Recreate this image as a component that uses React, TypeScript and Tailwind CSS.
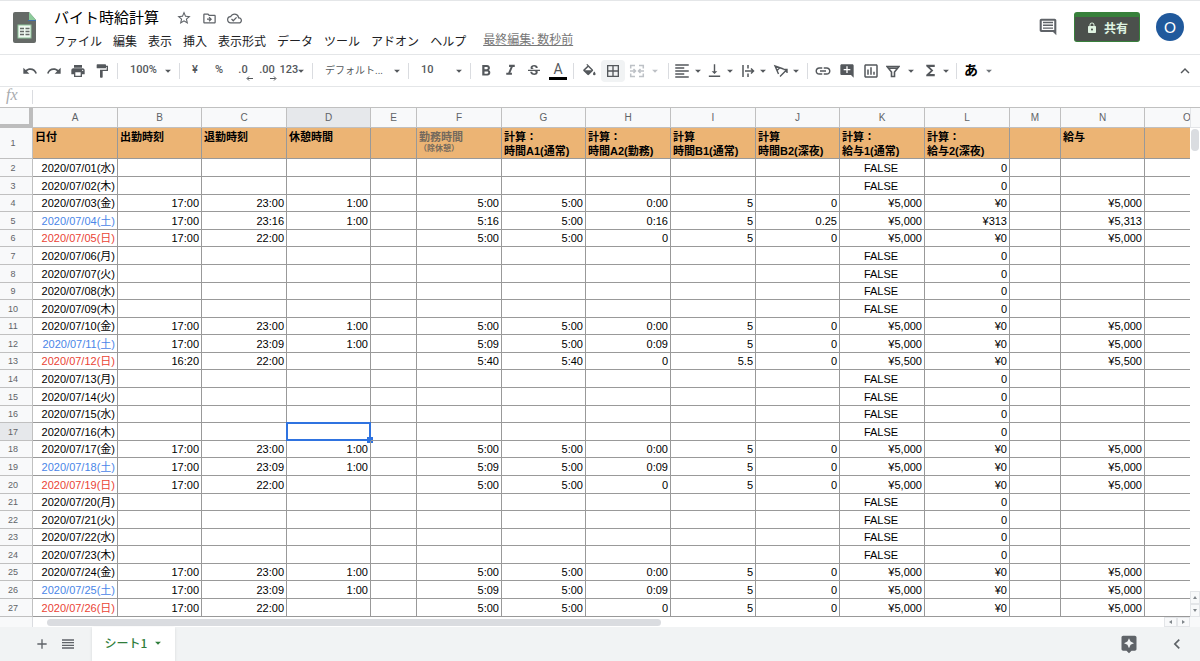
import React, { useState } from 'react';
import {
  MdAddComment,
  MdArrowDropDown,
  MdAssistant,
  MdBorderAll,
  MdChevronLeft,
  MdAdd,
  MdFormatAlignLeft,
  MdFormatBold,
  MdFormatColorFill,
  MdFormatItalic,
  MdFormatPaint,
  MdFunctions,
  MdKeyboardArrowUp,
  MdLink,
  MdLock,
  MdOutlineCloudDone,
  MdOutlineDriveFileMove,
  MdOutlineInsertChart,
  MdPrint,
  MdRedo,
  MdReorder,
  MdStarBorder,
  MdStrikethroughS,
  MdUndo,
  MdVerticalAlignBottom,
} from 'react-icons/md';

const MENUS = ['ファイル', '編集', '表示', '挿入', '表示形式', 'データ', 'ツール', 'アドオン', 'ヘルプ'];

const COLUMNS = [
  { id: 'A', width: 'w-[85px]', title: '日付' },
  { id: 'B', width: 'w-[84px]', title: '出勤時刻' },
  { id: 'C', width: 'w-[85px]', title: '退勤時刻' },
  { id: 'D', width: 'w-[84px]', title: '休憩時間' },
  { id: 'E', width: 'w-[46px]', title: '' },
  { id: 'F', width: 'w-[85px]', title: '勤務時間', note: '（除休憩）' },
  { id: 'G', width: 'w-[84px]', title: '計算：', sub: '時間A1(通常)' },
  { id: 'H', width: 'w-[85px]', title: '計算：', sub: '時間A2(勤務)' },
  { id: 'I', width: 'w-[85px]', title: '計算', sub: '時間B1(通常)' },
  { id: 'J', width: 'w-[84px]', title: '計算', sub: '時間B2(深夜)' },
  { id: 'K', width: 'w-[85px]', title: '計算：', sub: '給与1(通常)' },
  { id: 'L', width: 'w-[85px]', title: '計算：', sub: '給与2(深夜)' },
  { id: 'M', width: 'w-[51px]', title: '' },
  { id: 'N', width: 'w-[84px]', title: '給与' },
  { id: 'O', width: 'w-[85px]', title: '' },
];

const WEEKDAYS = ['日', '月', '火', '水', '木', '金', '土'];

// Worked days only: start, end, break, total, A1, A2, B1, B2, pay 1, pay 2, total pay
const SHIFTS: Record<number, string[]> = {
  3: ['17:00', '23:00', '1:00', '5:00', '5:00', '0:00', '5', '0', '¥5,000', '¥0', '¥5,000'],
  4: ['17:00', '23:16', '1:00', '5:16', '5:00', '0:16', '5', '0.25', '¥5,000', '¥313', '¥5,313'],
  5: ['17:00', '22:00', '', '5:00', '5:00', '0', '5', '0', '¥5,000', '¥0', '¥5,000'],
  10: ['17:00', '23:00', '1:00', '5:00', '5:00', '0:00', '5', '0', '¥5,000', '¥0', '¥5,000'],
  11: ['17:00', '23:09', '1:00', '5:09', '5:00', '0:09', '5', '0', '¥5,000', '¥0', '¥5,000'],
  12: ['16:20', '22:00', '', '5:40', '5:40', '0', '5.5', '0', '¥5,500', '¥0', '¥5,500'],
  17: ['17:00', '23:00', '1:00', '5:00', '5:00', '0:00', '5', '0', '¥5,000', '¥0', '¥5,000'],
  18: ['17:00', '23:09', '1:00', '5:09', '5:00', '0:09', '5', '0', '¥5,000', '¥0', '¥5,000'],
  19: ['17:00', '22:00', '', '5:00', '5:00', '0', '5', '0', '¥5,000', '¥0', '¥5,000'],
  24: ['17:00', '23:00', '1:00', '5:00', '5:00', '0:00', '5', '0', '¥5,000', '¥0', '¥5,000'],
  25: ['17:00', '23:09', '1:00', '5:09', '5:00', '0:09', '5', '0', '¥5,000', '¥0', '¥5,000'],
  26: ['17:00', '22:00', '', '5:00', '5:00', '0', '5', '0', '¥5,000', '¥0', '¥5,000'],
};

const buildRow = (day: number) => {
  const weekday = (day + 2) % 7;
  const date = `2020/07/${String(day).padStart(2, '0')}(${WEEKDAYS[weekday]})`;
  const s = SHIFTS[day];
  const values: Record<string, string> = s
    ? { A: date, B: s[0], C: s[1], D: s[2], F: s[3], G: s[4], H: s[5], I: s[6], J: s[7], K: s[8], L: s[9], N: s[10] }
    : { A: date, K: 'FALSE', L: '0' };
  // seven tall rows in every twelve
  const tall = Math.ceil((day * 7) / 12) > Math.ceil(((day - 1) * 7) / 12);
  return { day, weekday, values, tall };
};

const ROWS = Array.from({ length: 26 }, (_, i) => buildRow(i + 1));

const Separator = () => <span className="mx-[3px] h-4 w-px shrink-0 bg-[#dadce0]" />;

const Caret = () => <MdArrowDropDown size={14} className="shrink-0" />;

interface ToolProps {
  label: string;
  className?: string;
  children: React.ReactNode;
}

const Tool: React.FC<ToolProps> = ({ label, className = 'w-6', children }) => (
  <button
    aria-label={label}
    className={`flex h-[22px] shrink-0 items-center justify-center rounded-sm hover:bg-[#f1f3f4] ${className}`}
  >
    {children}
  </button>
);

interface PickerProps {
  label: string;
  className: string;
  options: string[];
}

const Picker: React.FC<PickerProps> = ({ label, className, options }) => (
  <div className={`relative flex h-[22px] shrink-0 items-center ${className}`}>
    <select aria-label={label} className="w-full appearance-none bg-transparent pl-[9px] outline-none">
      {options.map((option) => (
        <option key={option}>{option}</option>
      ))}
    </select>
    <span className="pointer-events-none absolute right-px">
      <Caret />
    </span>
  </div>
);

const SheetsLogo = () => (
  <svg width="24" height="32" viewBox="0 0 24 32" className="shrink-0">
    <path d="M2 0h14l7 8v21a2 2 0 0 1-2 2H2a2 2 0 0 1-2-2V2a2 2 0 0 1 2-2z" fill="#656a67" />
    <path d="M16 0l7 8h-7z" fill="#8ccb9b" />
    <path d="M15 8.500h8" stroke="#3e6ea8" />
    <rect x="5" y="13" width="13" height="13" fill="#eef8f0" stroke="#8fc49b" />
    <path d="M7 16.500h4M12.500 16.500h4M7 19.500h4M12.500 19.500h4M7 22.500h4M12.500 22.500h4" stroke="#656a67" strokeWidth="1.500" />
  </svg>
);

const Header = () => (
  <header className="flex items-start justify-between border-y border-[#e4e6e8] pr-4 pl-[13px]">
    <div className="flex">
      <div className="pt-[11px]">
        <SheetsLogo />
      </div>
      <div className="ml-[17px] pt-1">
        <div className="flex h-[23px] items-center">
          <h1 className="text-[15px] leading-5 text-black">バイト時給計算</h1>
          <div className="ml-[17px] flex items-center gap-[10px] pt-[3px] text-[#5f6368]">
            <button aria-label="スター"><MdStarBorder size={16} /></button>
            <button aria-label="移動"><MdOutlineDriveFileMove size={15} /></button>
            <button aria-label="保存状況"><MdOutlineCloudDone size={15} /></button>
          </div>
        </div>
        <nav className="flex h-[26px] items-center gap-[11px] whitespace-nowrap text-[12px] text-[#202124]">
          {MENUS.map((menu) => (
            <button key={menu}>{menu}</button>
          ))}
          <a href="#history" className="ml-[6px] pb-1 text-[#777] underline">最終編集: 数秒前</a>
        </nav>
      </div>
    </div>
    <div className="flex h-[52px] items-center">
      <button aria-label="コメント履歴" className="mr-4 text-[#5f6368]">
        <svg width="20" height="20" viewBox="0 0 24 24" fill="currentColor">
          <path d="M22 4c0-1.100-.9-2-2-2H4c-1.100 0-2 .9-2 2v12c0 1.100.9 2 2 2h14l4 4V4zM4.500 4.500h15v11h-15z" fillRule="evenodd" />
          <path d="M6 5.700h12v1.700H6zM6 9h12v1.800H6zM6 12.500h12v1.700H6z" />
        </svg>
      </button>
      <button className="flex h-[30px] w-[66px] items-center justify-center gap-[6px] rounded-[3px] border border-t-[5px] border-[#37803b] bg-[#4b504c] pb-[3px] text-[12px] font-bold text-[#dff3e1]">
        <MdLock size={12} />
        共有
      </button>
      <button aria-label="アカウント" className="ml-4 flex h-[28px] w-[28px] items-center justify-center rounded-full bg-[#20599c] font-[Lato] text-[15px] text-white">
        O
      </button>
    </div>
  </header>
);

const Toolbar = () => (
  <div className="flex h-[32px] items-center border-b border-[#e4e6e8] pr-[3px] pl-[18px] font-[Roboto,'Noto_Sans_CJK_JP',sans-serif] text-[11px] font-medium text-[#54585c]">
    <Tool label="元に戻す"><MdUndo size={16} /></Tool>
    <Tool label="やり直し"><MdRedo size={16} /></Tool>
    <Tool label="印刷"><MdPrint size={16} /></Tool>
    <Tool label="書式を貼り付け"><MdFormatPaint size={16} /></Tool>
    <Separator />
    <Picker label="ズーム" className="w-[55px]" options={['100%', '75%', '50%']} />
    <Separator />
    <Tool label="通貨の表示形式">¥</Tool>
    <Tool label="パーセント">%</Tool>
    <Tool label="小数点以下の桁数を減らす">
      <span className="relative">
        .0
        <svg className="absolute right-[-5px] bottom-[-2px]" width="7" height="5" viewBox="0 0 7 5">
          <path d="M7 2.500H1.500M3 .5l-2 2 2 2" fill="none" stroke="currentColor" />
        </svg>
      </span>
    </Tool>
    <Tool label="小数点以下の桁数を増やす">
      <span className="relative">
        .00
        <svg className="absolute right-[-2px] bottom-[-2px]" width="7" height="5" viewBox="0 0 7 5">
          <path d="M0 2.500h5.500M4 .5l2 2-2 2" fill="none" stroke="currentColor" />
        </svg>
      </span>
    </Tool>
    <Tool label="表示形式の詳細" className="w-[30px]">123<span className="-ml-1"><Caret /></span></Tool>
    <Separator />
    <div className="text-[10px] font-normal">
      <Picker label="フォント" className="w-[89px]" options={['デフォルト...', 'Arial', 'Roboto']} />
    </div>
    <Separator />
    <Picker label="フォントサイズ" className="w-[55px]" options={['10', '11', '12']} />
    <Separator />
    <Tool label="太字"><MdFormatBold size={18} /></Tool>
    <Tool label="斜体"><MdFormatItalic size={17} /></Tool>
    <Tool label="取り消し線"><MdStrikethroughS size={16} /></Tool>
    <Tool label="テキストの色">
      <span className="flex h-[18px] w-[18px] items-start justify-center border-b-[3px] border-black text-[14px] leading-[14px] font-normal">A</span>
    </Tool>
    <Separator />
    <Tool label="塗りつぶしの色">
      <svg width="14" height="14" viewBox="0 0 14 14" fill="currentColor">
        <path d="M4.300.8l1-.8 5.500 5.600c.5.500.5 1 0 1.500L7 10.800c-.5.500-1.100.5-1.600 0L1.500 7.100c-.5-.5-.5-1 0-1.500l4-3.800zM6.300 3L3 6.200h6.600z" fillRule="evenodd" />
        <path d="M12.300 7.500s-1.300 1.500-1.300 2.400a1.300 1.300 0 0 0 2.600 0c0-.9-1.300-2.400-1.300-2.400z" />
      </svg>
    </Tool>
    <Tool label="枠線" className="w-6 bg-[#f1f3f4]"><MdBorderAll size={16} /></Tool>
    <Tool label="セルを結合" className="w-10 gap-[3px] text-[#bdc1c6]">
      <svg width="16" height="16" viewBox="0 0 16 16" fill="none" stroke="currentColor" strokeWidth="1.500">
        <path d="M6 2.500H1.700v3M10 2.500h4.300v3M6 13.500H1.700v-3M10 13.500h4.300v-3M1 8h5M15 8h-5M4.500 6L6.500 8l-2 2M11.500 6l-2 2 2 2" />
      </svg>
      <Caret />
    </Tool>
    <Separator />
    <Tool label="水平方向の配置" className="w-[33px]"><MdFormatAlignLeft size={18} /><Caret /></Tool>
    <Tool label="垂直方向の配置" className="w-[33px]"><MdVerticalAlignBottom size={17} /><Caret /></Tool>
    <Tool label="テキストを折り返す" className="w-[33px]">
      <svg width="16" height="16" viewBox="0 0 16 16" fill="none" stroke="currentColor" strokeWidth="1.500">
        <path d="M3 2v12M8 2v3.500M8 10.500V14M5 8h8M11 5.500L13.500 8 11 10.500" />
      </svg>
      <Caret />
    </Tool>
    <Tool label="テキストの回転" className="w-[33px]">
      <svg width="16" height="16" viewBox="0 0 16 16" fill="none" stroke="currentColor" strokeWidth="1.400">
        <path d="M5.500 11L2 3l8.500 3M4 7.500l3-3M7 13.500L13.500 7M10.500 6.500h3.500V10" />
      </svg>
      <Caret />
    </Tool>
    <Separator />
    <Tool label="リンクを挿入"><MdLink size={18} /></Tool>
    <Tool label="コメントを挿入"><MdAddComment size={16} /></Tool>
    <Tool label="グラフを挿入"><MdOutlineInsertChart size={18} /></Tool>
    <Tool label="フィルタを作成" className="w-[38px] gap-1">
      <svg width="14" height="14" viewBox="0 0 14 14" fill="none" stroke="currentColor" strokeWidth="1.600">
        <path d="M1 2.500h12L8.500 8v4.500h-3V8zM3 4.200h8" />
      </svg>
      <Caret />
    </Tool>
    <Tool label="関数" className="w-8"><MdFunctions size={17} /><Caret /></Tool>
    <Separator />
    <Tool label="入力ツール" className="w-[40px] gap-1 text-[14px] font-bold text-black">
      あ
      <span className="text-[#70757a]"><Caret /></span>
    </Tool>
    <div className="ml-auto">
      <Tool label="メニューを非表示"><MdKeyboardArrowUp size={18} /></Tool>
    </div>
  </div>
);

interface GridProps {
  selected: string;
  onSelect: (cell: string) => void;
}

const Grid: React.FC<GridProps> = ({ selected, onSelect }) => {
  const dateColor = (weekday: number) => {
    if (weekday === 6) return 'text-[#4a86e8]';
    if (weekday === 0) return 'text-[#ea4335]';
    return 'text-black';
  };

  return (
    <div className="min-w-0 flex-1 overflow-hidden">
      <table className="w-max table-fixed border-separate border-spacing-0 font-['Liberation_Sans','Noto_Sans_CJK_JP',sans-serif] text-[11px] leading-4 text-black">
        <colgroup>
          <col className="w-[33px]" />
          {COLUMNS.map((col) => (
            <col key={col.id} className={col.width} />
          ))}
        </colgroup>
        <thead>
          <tr className="h-5 text-[10px] text-[#5f6368]">
            <td className="w-[33px] border-r-4 border-b-4 border-[#bdbdbd] bg-[#f8f9fa] p-0" />
            {COLUMNS.map((col) => (
              <th
                key={col.id}
                scope="col"
                className={`border-r border-b border-[#c0c0c0] p-0 font-normal ${col.width} ${selected.startsWith(col.id) ? 'bg-[#e6e8eb]' : 'bg-[#f8f9fa]'}`}
              >
                {col.id}
              </th>
            ))}
          </tr>
        </thead>
        <tbody>
          <tr className="h-[31px]">
            <th scope="row" className="border-r border-b border-[#c0c0c0] bg-[#f8f9fa] p-0 pr-[6px] text-[9px] font-normal text-[#5f6368]">1</th>
            {COLUMNS.map((col) => (
              <td
                key={col.id}
                className={`border-r border-b border-[#999] bg-[#ecb474] p-0 pt-[2px] pl-[2px] align-top leading-[14px] font-bold whitespace-nowrap ${col.note ? 'text-[#74695d]' : ''}`}
              >
                {col.title}
                {col.sub && <div>{col.sub}</div>}
                {col.note && <div className="text-[8px] leading-[10px]">{col.note}</div>}
              </td>
            ))}
          </tr>
          {ROWS.map((row) => (
            <tr key={row.day} className={row.tall ? 'h-[18px]' : 'h-[17px]'}>
              <th
                scope="row"
                className={`border-r border-b border-[#c0c0c0] p-0 pr-[6px] text-[9px] font-normal text-[#5f6368] ${selected.endsWith(`-${row.day + 1}`) ? 'bg-[#e6e8eb]' : 'bg-[#f8f9fa]'}`}
              >
                {row.day + 1}
              </th>
              {COLUMNS.map((col) => {
                const cell = `${col.id}-${row.day + 1}`;
                const value = row.values[col.id] ?? '';
                return (
                  <td
                    key={col.id}
                    onClick={() => onSelect(cell)}
                    className={`relative border-r border-b border-[#999] p-0 pr-[2px] whitespace-nowrap ${value === 'FALSE' ? 'text-center' : 'text-right'} ${col.id === 'A' ? dateColor(row.weekday) : ''}`}
                  >
                    {value}
                    {selected === cell && (
                      <span className="absolute -inset-px border-2 border-[#2f73e0]">
                        <span className="absolute -right-1 -bottom-1 h-[6px] w-[6px] bg-[#2f73e0]" />
                      </span>
                    )}
                  </td>
                );
              })}
            </tr>
          ))}
          <tr className="h-[18px]">
            <th scope="row" className="border-r border-[#c0c0c0] bg-[#f8f9fa] p-0" />
            {COLUMNS.map((col) => (
              <td key={col.id} className="border-r border-[#999] p-0" />
            ))}
          </tr>
        </tbody>
      </table>
    </div>
  );
};

const arrowButton = 'flex items-center justify-center border border-[#e3e5e8] bg-[#f8f9fa] text-[#80868b]';

const VerticalScroll = () => (
  <div className="flex w-[10px] shrink-0 flex-col bg-white">
    <div className="h-5 shrink-0 border-b border-l border-[#e3e5e8] bg-[#f8f9fa]" />
    <div className="flex-1 px-[1px] pt-px">
      <div className="h-[22px] rounded-full bg-[#dadce0]" />
    </div>
    <button aria-label="上へ" className={`h-[13px] ${arrowButton}`}>
      <svg width="4" height="3"><path d="M0 3l2-3 2 3z" fill="currentColor" /></svg>
    </button>
    <button aria-label="下へ" className={`h-[13px] ${arrowButton}`}>
      <svg width="4" height="3"><path d="M0 0l2 3 2-3z" fill="currentColor" /></svg>
    </button>
  </div>
);

const HorizontalScroll = () => (
  <div className="flex h-[10px] shrink-0 bg-white">
    <div className="w-[33px] border-r border-[#dadce0] bg-[#f8f9fa]" />
    <div className="flex flex-1 items-center pl-[14px]">
      <div className="h-[7px] w-[55%] rounded-full bg-[#dadce0]" />
    </div>
    <button aria-label="左へ" className={`w-[13px] ${arrowButton}`}>
      <svg width="3" height="4"><path d="M3 0L0 2l3 2z" fill="currentColor" /></svg>
    </button>
    <button aria-label="右へ" className={`w-[13px] ${arrowButton}`}>
      <svg width="3" height="4"><path d="M0 0l3 2-3 2z" fill="currentColor" /></svg>
    </button>
    <div className="w-[10px] bg-[#f8f9fa]" />
  </div>
);

const SheetTabs = () => (
  <footer className="flex h-[34px] shrink-0 items-stretch bg-[#f1f3f4] text-[#5f6368]">
    <div className="flex items-center gap-[10px] pr-4 pl-[34px]">
      <button aria-label="シートを追加"><MdAdd size={16} /></button>
      <button aria-label="すべてのシート"><MdReorder size={16} /></button>
    </div>
    <button className="flex w-[83px] items-center justify-center gap-1 bg-white pb-[3px] pl-[3px] text-[12px] font-medium text-[#2f7d3b] shadow-sm">
      シート1
      <Caret />
    </button>
    <div className="ml-auto flex items-center gap-[28px] pr-[13px]">
      <button aria-label="データ探索"><MdAssistant size={20} /></button>
      <button aria-label="サイドパネルを表示"><MdChevronLeft size={20} /></button>
    </div>
  </footer>
);

const App: React.FC = () => {
  const [selected, setSelected] = useState('D-17');
  const [formula, setFormula] = useState('');

  return (
    <div className="flex h-screen flex-col overflow-hidden bg-white font-['Noto_Sans_CJK_JP',sans-serif]">
      <Header />
      <Toolbar />
      <div className="flex h-5 shrink-0 items-center">
        <label htmlFor="formula" className="w-8 pb-1 pl-[6px] font-['Liberation_Serif',serif] text-[16px] leading-4 text-[#a8abae] italic">
          fx
        </label>
        <input
          id="formula"
          value={formula}
          onChange={(e) => setFormula(e.target.value)}
          className="h-[14px] flex-1 border-l border-[#dadce0] px-2 text-[11px] outline-none"
        />
      </div>
      <main className="flex min-h-0 flex-1 border-t border-[#c0c0c0]">
        <Grid selected={selected} onSelect={setSelected} />
        <VerticalScroll />
      </main>
      <HorizontalScroll />
      <SheetTabs />
    </div>
  );
};

export default App;
